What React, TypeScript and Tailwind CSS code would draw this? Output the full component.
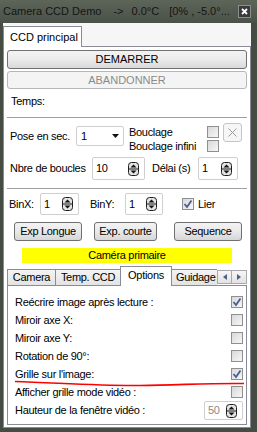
import React from "react";

const SpinIcon = () => (
  <svg width="11" height="14" viewBox="0 0 11 14" className="shrink-0">
    <rect x="0.5" y="0.5" width="10" height="13" rx="3" fill="#e4e4e4" stroke="#1c1c1c" />
    <line x1="1" y1="7" x2="10" y2="7" stroke="#1c1c1c" />
    <path d="M2.5 5.5 L5.5 2.5 L8.5 5.5 Z" fill="#111" />
    <path d="M2.5 8.5 L8.5 8.5 L5.5 11.5 Z" fill="#111" />
  </svg>
);

function SpinBox({ value, w, grey }: { value: string; w: string; grey?: boolean }) {
  return (
    <div
      className={`${w} h-full bg-white border border-[#cfcfcf] rounded-[2px] flex items-center justify-between pl-[3px] pr-[5px]`}
    >
      <span className={grey ? "text-[#8a8a8a]" : "text-black"}>{value}</span>
      <SpinIcon />
    </div>
  );
}

function Check({ checked }: { checked?: boolean }) {
  return (
    <div className="w-[12px] h-[12px] border border-[#8e8f8f] bg-gradient-to-br from-[#d8d8d8] to-[#f7f7f7] flex items-center justify-center shrink-0">
      {checked && (
        <svg width="10" height="10" viewBox="0 0 10 10">
          <path d="M1.5 5 L4 8 L8.5 1.5" fill="none" stroke="#4a5d94" strokeWidth="1.8" />
        </svg>
      )}
    </div>
  );
}

function Btn({ children, w }: { children: React.ReactNode; w: string }) {
  return (
    <div
      className={`${w} h-[19px] border border-[#707070] rounded-[3px] bg-gradient-to-b from-[#f3f3f3] via-[#e9e9e9] to-[#d6d6d6] flex items-center justify-center text-black`}
    >
      {children}
    </div>
  );
}

function OptRow({ label, checked, children }: { label: string; checked?: boolean; children?: React.ReactNode }) {
  return (
    <div className="h-[18px] flex items-center justify-between pl-[7px] pr-[3px]">
      <span>{label}</span>
      {children ?? <Check checked={checked} />}
    </div>
  );
}

export default function App() {
  return (
    <div className="relative w-[257px] h-[432px] bg-[#454c43] flex flex-col font-['Liberation_Sans',Arial,sans-serif] text-[11px] leading-none text-black overflow-hidden">
      {/* Title bar */}
      <div className="h-[23px] flex items-center pl-[3px] pr-[6px] bg-gradient-to-b from-[#5d6559] to-[#4a5148] text-[#151515] whitespace-pre">
        <span>Camera CCD Demo</span>
        <span className="ml-[12px]">-&gt;</span>
        <span className="ml-[8px]">0.0°C</span>
        <span className="ml-[10px]">[0% , -5.0°...</span>
        <div className="ml-auto w-[13px] h-[13px] bg-[#3a3a3a] border border-[#8d8d8d] flex items-center justify-center">
          <svg width="7" height="7" viewBox="0 0 7 7">
            <path d="M1 1 L6 6 M6 1 L1 6" stroke="#fff" strokeWidth="1.8" />
          </svg>
        </div>
      </div>

      {/* Client */}
      <div className="flex-1 ml-[3px] mr-[6px] mb-[4px] bg-[#f6f6f6] flex flex-col tracking-[-0.3px]">
        <div className="pt-[3px] flex">
          <div className="relative z-10 -mb-px w-[79px] h-[21px] bg-white border border-b-0 border-[#898c95] pl-[6px] flex items-center tracking-normal">
            CCD principal
          </div>
        </div>
        <div className="flex-1 bg-white border border-[#898c95] px-[3px] flex flex-col">
          <div className="mt-[3px] h-[19px] border border-[#707070] rounded-[3px] bg-gradient-to-b from-[#f3f3f3] via-[#ebebeb] to-[#d9d9d9] flex items-center justify-center tracking-normal">
            DEMARRER
          </div>
          <div className="mt-[2px] h-[18px] border border-[#b5b7b9] rounded-[3px] bg-[#f4f4f4] flex items-center justify-center text-[#8b8b8b] tracking-normal">
            ABANDONNER
          </div>
          <div className="h-[24px] flex items-center pl-[4px]">Temps:</div>
          <div className="mt-[4px] h-px bg-[#a0a0a0]" />

          {/* Pose block */}
          <div className="h-[39px] flex">
            <div className="flex items-center pb-[3px] pl-[3px]">
              <span className="w-[66px]">Pose en sec.</span>
              <div className="w-[48px] h-[20px] bg-white border border-[#cfcfcf] rounded-[2px] flex items-center justify-between pl-[4px] pr-[4px]">
                <span>1</span>
                <svg width="7" height="4" viewBox="0 0 7 4">
                  <path d="M0 0 L7 0 L3.5 4 Z" fill="#111" />
                </svg>
              </div>
            </div>
            <div className="ml-[5px] mt-[7px] w-[90px] flex flex-col">
              <div className="h-[14px] flex items-center justify-between">
                <span>Bouclage</span>
                <Check />
              </div>
              <div className="h-[14px] flex items-center justify-between">
                <span>Bouclage infini</span>
                <Check />
              </div>
            </div>
            <div className="ml-[4px] mt-[5px] w-[19px] h-[19px] border border-[#c5c5c5] rounded-[3px] bg-[#f6f6f6] flex items-center justify-center">
              <svg width="9" height="9" viewBox="0 0 9 9">
                <path d="M0.5 0.5 L8.5 8.5 M8.5 0.5 L0.5 8.5" stroke="#9a9a9a" strokeWidth="1" />
              </svg>
            </div>
          </div>

          {/* Nbre row */}
          <div className="h-[23px] flex items-center">
            <span className="pl-[3px] w-[85px]">Nbre de boucles</span>
            <SpinBox value="10" w="w-[53px]" />
            <span className="ml-[7px] w-[46px]">Délai (s)</span>
            <SpinBox value="1" w="w-[40px]" />
          </div>
          <div className="mt-[8px] h-px bg-[#a0a0a0]" />

          {/* Bin row */}
          <div className="mt-[4px] h-[22px] flex items-center">
            <span className="pl-[2px] w-[33px]">BinX:</span>
            <SpinBox value="1" w="w-[39px]" />
            <span className="ml-[11px] w-[35px]">BinY:</span>
            <SpinBox value="1" w="w-[38px]" />
            <div className="ml-[19px]">
              <Check checked />
            </div>
            <span className="ml-[4px]">Lier</span>
          </div>

          {/* Buttons */}
          <div className="mt-[7px] flex">
            <div className="ml-[7px]">
              <Btn w="w-[68px]">Exp Longue</Btn>
            </div>
            <div className="ml-[12px]">
              <Btn w="w-[63px]">Exp. courte</Btn>
            </div>
            <div className="ml-[17px]">
              <Btn w="w-[68px]">Sequence</Btn>
            </div>
          </div>

          {/* Yellow */}
          <div className="mt-[7px] ml-[15px] w-[210px] h-[15px] bg-[#ffff00] flex items-center justify-center">
            Caméra primaire
          </div>

          {/* Tabs */}
          <div className="mt-[3px] h-[19px] flex items-start relative z-10">
            <div className="mt-[3px] w-[49px] h-[16px] border border-b-0 border-[#898c95] bg-gradient-to-b from-[#f4f4f4] to-[#e3e3e3] flex items-center justify-center">
              Camera
            </div>
            <div className="mt-[3px] -ml-px w-[66px] h-[16px] border border-b-0 border-[#898c95] bg-gradient-to-b from-[#f4f4f4] to-[#e3e3e3] flex items-center justify-center">
              Temp. CCD
            </div>
            <div className="-ml-px w-[52px] h-[20px] border border-b-0 border-[#898c95] bg-white flex items-center justify-center pb-[2px]">
              Options
            </div>
            <div className="mt-[3px] -ml-px w-[46px] h-[16px] border border-b-0 border-r-0 border-[#898c95] bg-gradient-to-b from-[#f4f4f4] to-[#e3e3e3] flex items-center pl-[4px] overflow-hidden whitespace-nowrap">
              Guidage
            </div>
            <div className="mt-[4px] w-[15px] h-[14px] border border-[#a7a9ad] bg-gradient-to-b from-[#f6f6f6] to-[#e2e2e2] flex items-center justify-center">
              <svg width="4" height="6" viewBox="0 0 4 6">
                <path d="M4 0 L0 3 L4 6 Z" fill="#4d6185" />
              </svg>
            </div>
            <div className="mt-[4px] w-[15px] h-[14px] border border-l-0 border-[#a7a9ad] bg-gradient-to-b from-[#f6f6f6] to-[#e2e2e2] flex items-center justify-center">
              <svg width="4" height="6" viewBox="0 0 4 6">
                <path d="M0 0 L4 3 L0 6 Z" fill="#4d6185" />
              </svg>
            </div>
          </div>

          {/* Options panel */}
          <div className="h-[140px] border border-[#898c95] bg-white flex flex-col pt-[7px]">
            <OptRow label="Reécrire image après lecture :" checked />
            <OptRow label="Miroir axe X:" />
            <OptRow label="Miroir axe Y:" />
            <OptRow label="Rotation de 90°:" />
            <OptRow label="Grille sur l'image:" checked />
            <OptRow label="Afficher grille mode vidéo :" />
            <div className="h-[19px] flex items-center justify-between pl-[7px] pr-[3px]">
              <span>Hauteur de la fenêtre vidéo :</span>
              <SpinBox value="50" w="w-[39px]" grey />
            </div>
          </div>
        </div>
      </div>

      {/* Red annotation line */}
      <svg className="absolute left-0 top-0 pointer-events-none" width="257" height="432" viewBox="0 0 257 432">
        <path
          d="M15 381.5 C 60 383, 100 386, 140 385.5 S 210 383, 244 383.5"
          fill="none"
          stroke="#ff0000"
          strokeWidth="1.6"
        />
      </svg>
    </div>
  );
}
